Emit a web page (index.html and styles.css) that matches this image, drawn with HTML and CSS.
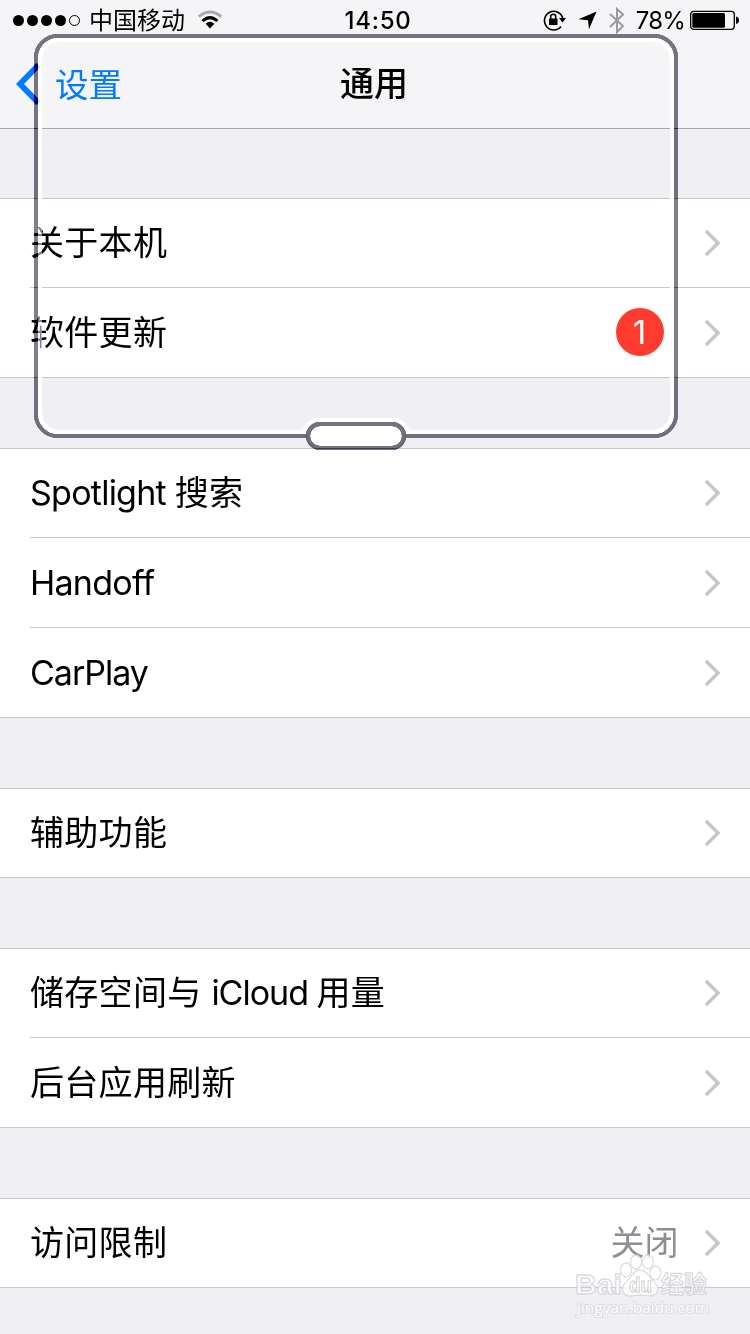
FILE: index.html
```html
<!DOCTYPE html>
<html lang="zh-CN">

<head>
    <meta charset="UTF-8">
    <meta name="viewport" content="width=device-width, initial-scale=1.0">
    <title>通用</title>
    <link rel="stylesheet" href="styles.css">
</head>

<body>
    <div class="phone">
        <header class="header">
            <div class="status">
                <div class="status-left">
                    <div class="signal"><i></i><i></i><i></i><i></i><i class="empty"></i></div>
                    <span class="carrier">中国移动</span>
                    <svg class="wifi" width="26" height="20" viewBox="0 0 26 20">
                        <path d="M1.8 6.6Q13-2.6 24.2 6.6" fill="none" stroke="#aaaaac" stroke-width="2.8"/>
                        <path d="M5.6 11Q13 4.2 20.4 11" fill="none" stroke="#000" stroke-width="3"/>
                        <path d="M8.6 13.7Q13 10 17.4 13.7L13 18.5Z"/>
                    </svg>
                </div>
                <span class="time">14:50</span>
                <div class="status-right">
                    <svg class="lock" width="24" height="22" viewBox="0 0 24 22">
                        <path d="M18 17.5A9.3 9.3 0 1 1 19.8 9.5" fill="none" stroke="#000" stroke-width="1.6"/>
                        <path d="M16 9h7l-3.5 4.5z"/>
                        <rect x="6" y="9.5" width="8.5" height="6.5" rx=".6"/>
                        <path d="M7.7 10V7.8a2.5 2.5 0 0 1 5 0V10" fill="none" stroke="#000" stroke-width="1.5"/>
                    </svg>
                    <svg class="arrow" width="19" height="19" viewBox="0 0 19 19">
                        <path d="M18.5.5L11 18.2 10 9.2.5 8.2z"/>
                    </svg>
                    <svg class="bluetooth" width="16" height="27" viewBox="0 0 16 27">
                        <path d="M1 7l13 12-6 6V2l6 5.5L1 20" fill="none" stroke="#9a9a9c" stroke-width="2"/>
                    </svg>
                    <span class="percent">78%</span>
                    <svg class="battery" width="49" height="20" viewBox="0 0 49 20">
                        <rect x=".7" y="1.3" width="43.6" height="18" rx="3" fill="none" stroke="#000" stroke-width="1.3"/>
                        <rect x="2.3" y="3" width="32.7" height="14.8" rx="1.5"/>
                        <path d="M46 6.5q3 .6 3 3.8T46 13.9z"/>
                    </svg>
                </div>
            </div>
            <div class="nav">
                <a class="back">
                    <svg width="25" height="42" viewBox="0 0 25 42">
                        <path d="M22.5 2L4 21l18.5 19" fill="none" stroke="#007aff" stroke-width="5.8"/>
                    </svg>
                    <span>设置</span>
                </a>
                <h1>通用</h1>
            </div>
        </header>

        <ul class="group">
            <li><span>关于本机</span><svg class="more" viewBox="0 0 18 28"><path d="M2 2l12 12L2 26"/></svg></li>
            <li><span>软件更新</span><b class="badge">1</b><svg class="more" viewBox="0 0 18 28"><path d="M2 2l12 12L2 26"/></svg></li>
        </ul>
        <ul class="group">
            <li><span><span class="en">Spotlight </span>搜索</span><svg class="more" viewBox="0 0 18 28"><path d="M2 2l12 12L2 26"/></svg></li>
            <li><span class="en">Handoff</span><svg class="more" viewBox="0 0 18 28"><path d="M2 2l12 12L2 26"/></svg></li>
            <li><span class="en tight">CarPlay</span><svg class="more" viewBox="0 0 18 28"><path d="M2 2l12 12L2 26"/></svg></li>
        </ul>
        <ul class="group">
            <li><span>辅助功能</span><svg class="more" viewBox="0 0 18 28"><path d="M2 2l12 12L2 26"/></svg></li>
        </ul>
        <ul class="group">
            <li><span>储存空间与 <span class="en tight">iCloud </span>用量</span><svg class="more" viewBox="0 0 18 28"><path d="M2 2l12 12L2 26"/></svg></li>
            <li><span>后台应用刷新</span><svg class="more" viewBox="0 0 18 28"><path d="M2 2l12 12L2 26"/></svg></li>
        </ul>
        <ul class="group">
            <li><span>访问限制</span><em class="value">关闭</em><svg class="more" viewBox="0 0 18 28"><path d="M2 2l12 12L2 26"/></svg></li>
        </ul>

        <!-- invert, lighten, invert back: darkens whatever is under the frame -->
        <div class="frame flip"></div>
        <div class="frame add"></div>
        <div class="frame flip"></div>
        <div class="frame-inner"></div>
        <div class="handle-glow"></div>
        <div class="handle-fill"></div>
        <div class="handle flip"></div>
        <div class="handle add"></div>
        <div class="handle flip"></div>

        <svg class="watermark" width="140" height="70" viewBox="0 0 140 70">
            <g fill="#fff" stroke="#d9d9dc" stroke-width="1.3">
                <ellipse cx="54" cy="20" rx="5.5" ry="7"/>
                <ellipse cx="64" cy="12" rx="5.5" ry="7"/>
                <ellipse cx="76" cy="12" rx="5.5" ry="7"/>
                <ellipse cx="83.5" cy="23" rx="5.5" ry="7"/>
                <path d="M68 20c7 0 9 7 13 11 8 6 5 15-3 15-4 0-7-1-10-1s-6 1-10 1c-8 0-10-9-3-15 5-4 6-11 13-11z"/>
            </g>
            <g class="mark">
                <text x="3" y="44" font-size="28" textLength="47" lengthAdjust="spacingAndGlyphs">Bai</text>
                <text x="57" y="42" font-size="20" textLength="23" lengthAdjust="spacingAndGlyphs">du</text>
                <text x="89" y="43" font-size="24" textLength="46" lengthAdjust="spacingAndGlyphs">经验</text>
            </g>
            <text class="site" x="5" y="63" textLength="132" lengthAdjust="spacingAndGlyphs">jingyan.baidu.com</text>
        </svg>
    </div>
</body>

</html>
```

FILE: styles.css
```css
* {
    margin: 0;
    padding: 0;
    box-sizing: border-box;
}

body {
    background: #efeff4;
    font-family: Inter, "Noto Sans CJK SC", sans-serif;
    color: #000;
}

ul {
    list-style: none;
}

svg {
    display: block;
    flex: none;
}

.phone {
    position: relative;
    width: 750px;
    height: 1334px;
    overflow: hidden;
    background: #efeff4;
    isolation: isolate;
}

.header {
    height: 129px;
    margin-bottom: 69px;
    background: #f5f5f7;
    border-bottom: 1px solid #a7a7ad;
}

.status {
    display: grid;
    grid-template-columns: 1fr auto 1fr;
    align-items: center;
    height: 40px;
    padding: 0 11px 0 13px;
    font-size: 24px;
}

.status-left, .status-right {
    display: flex;
    align-items: center;
}

.status-right {
    justify-content: flex-end;
}

.signal {
    display: flex;
    gap: 3px;
}

.signal i {
    width: 11px;
    height: 11px;
    border-radius: 50%;
    background: #000;
}

.signal .empty {
    background: none;
    border: 1px solid #000;
}

.carrier {
    margin-left: 9px;
    padding-bottom: 3px;
    line-height: 36px;
    font-family: "Noto Sans CJK SC", sans-serif;
}

.wifi {
    margin-left: 12px;
}

.time {
    padding-left: 4px;
    font-weight: 500;
    letter-spacing: 0.7px;
}

.lock {
    margin-right: 11px;
}

.arrow {
    margin-right: 12px;
}

.bluetooth {
    margin-right: 11px;
}

.percent {
    margin-right: 5px;
    letter-spacing: -0.8px;
}

.nav {
    display: grid;
    grid-template-columns: 1fr auto 1fr;
    align-items: center;
    height: 88px;
}

.back {
    display: flex;
    align-items: center;
    padding-left: 16px;
    color: #007aff;
    font-size: 33.5px;
}

.back span {
    margin-left: 14px;
    padding-bottom: 4px;
}

.nav h1 {
    padding-right: 2px;
    padding-bottom: 5px;
    font-size: 34px;
    font-weight: 500;
}

.group {
    margin-bottom: 70px;
    background: #fff;
    border-top: 1px solid #c8c7cc;
    border-bottom: 1px solid #c8c7cc;
}

.group li {
    display: flex;
    align-items: center;
    height: 90px;
    margin-left: 30px;
    padding-right: 28.5px;
    border-bottom: 1px solid #c8c7cc;
    font-size: 34px;
    line-height: 48px;
    letter-spacing: 0.3px;
}

.group .en {
    letter-spacing: -0.75px;
}

.group .tight {
    letter-spacing: -1px;
}

.group li:first-child {
    height: 89px;
}

.group li:first-child > span {
    padding-bottom: 1px;
}

.group li:last-child {
    height: 89px;
    border-bottom: none;
}

.group li:only-child {
    height: 88px;
}

.more {
    width: 18px;
    height: 28px;
    margin-left: auto;
    fill: none;
    stroke: #c7c7cc;
    stroke-width: 3.6;
}

.badge, .value {
    margin-left: auto;
}

.badge {
    width: 48px;
    height: 48px;
    margin-bottom: 2px;
    padding-right: 1px;
    border-radius: 50%;
    background: #ff3b30;
    color: #fff;
    font-size: 33px;
    font-weight: 400;
    text-align: center;
}

.badge + .more {
    margin-left: 39.5px;
}

.value {
    padding-bottom: 1px;
    color: #8e8e93;
    font-style: normal;
    letter-spacing: 0;
}

.value + .more {
    margin-left: 25px;
}

/* screen overlay */
.frame {
    position: absolute;
    left: 34px;
    top: 34px;
    width: 644px;
    height: 404px;
    border: 4px solid;
    border-radius: 24px;
    clip-path: polygon(0 0, 100% 0, 100% 100%, 372px 100%, 372px 390px, 272px 390px, 272px 100%, 0 100%);
}

.flip {
    border-color: #fff;
    mix-blend-mode: difference;
}

.add {
    border-color: #7d8273;
    mix-blend-mode: plus-lighter;
}

.frame-inner {
    position: absolute;
    left: 38px;
    top: 38px;
    width: 636px;
    height: 396px;
    border: 4px solid #827f90;
    border-radius: 20px;
    mix-blend-mode: plus-lighter;
}

.handle-glow {
    position: absolute;
    left: 302px;
    top: 418px;
    width: 108px;
    height: 16px;
    border-radius: 18px 18px 0 0;
    background: #fff;
}

.handle-fill {
    position: absolute;
    left: 308px;
    top: 424px;
    width: 96px;
    height: 24px;
    border-radius: 12px;
    background: #fff;
}

.handle {
    position: absolute;
    left: 306px;
    top: 422px;
    width: 100px;
    height: 28px;
    border: 4px solid;
    border-radius: 14px;
}

.handle.flip {
    border-color: #fff;
}

.handle.add {
    border-color: #8a8c7d;
}

.watermark {
    position: absolute;
    left: 572px;
    top: 1250px;
    opacity: 0.85;
}

.mark {
    fill: #fff;
    stroke: #d5d5d8;
    stroke-width: 1.3;
    font-family: "Liberation Sans", "Noto Sans CJK SC", sans-serif;
    font-weight: 700;
}

.site {
    fill: #fff;
    stroke: #dcdce0;
    stroke-width: 2;
    paint-order: stroke;
    font-family: "Open Sans", sans-serif;
    font-size: 15px;
}
```
